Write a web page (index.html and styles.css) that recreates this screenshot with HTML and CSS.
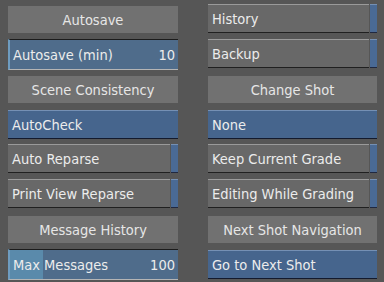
FILE: index.html
```html
<!DOCTYPE html>
<html lang="en">

<head>
    <meta charset="utf-8">
    <title>Preferences</title>
    <link rel="stylesheet" href="styles.css">
</head>

<body>
    <main class="panel">
        <div class="head">Autosave</div>
        <div class="btn"><span class="btn-body">History</span><span class="strip"></span></div>

        <div class="field"><span>Autosave (min)</span><span>10</span></div>
        <div class="btn"><span class="btn-body">Backup</span><span class="strip"></span></div>

        <div class="head">Scene Consistency</div>
        <div class="head">Change Shot</div>

        <div class="drop">AutoCheck</div>
        <div class="drop">None</div>

        <div class="btn"><span class="btn-body">Auto Reparse</span><span class="strip"></span></div>
        <div class="btn"><span class="btn-body">Keep Current Grade</span><span class="strip"></span></div>

        <div class="btn"><span class="btn-body">Print View Reparse</span><span class="strip"></span></div>
        <div class="btn"><span class="btn-body">Editing While Grading</span><span class="strip"></span></div>

        <div class="head">Message History</div>
        <div class="head">Next Shot Navigation</div>

        <div class="field slider"><span>Max Messages</span><span>100</span></div>
        <div class="drop">Go to Next Shot</div>
    </main>
</body>

</html>
```

FILE: styles.css
```css
* {
    box-sizing: border-box;
}

body {
    margin: 0;
    background-color: #565656;
    font-family: 'DejaVu Sans Condensed', 'DejaVu Sans', sans-serif;
    font-size: 14.5px;
    color: #ececec;
}

.panel {
    display: grid;
    grid-template-columns: 170px 169px;
    grid-auto-rows: 35px;
    column-gap: 30px;
    padding: 4px 0 0 8px;
    align-items: start;
}

.head {
    margin-top: 2px;
    height: 27px;
    line-height: 28px;
    text-align: center;
    background-color: #717171;
    color: #e6e6e6;
}

/* value field */
.field {
    display: flex;
    justify-content: space-between;
    height: 31px;
    line-height: 30px;
    padding: 0 3px 0 3px;
    background-color: #4f6c8b;
    border-top: 1px solid #1c1c1c;
    border-bottom: 1px solid #b5b5b5;
    border-left: 2px solid #6e9cc0;
}

.slider {
    background: linear-gradient(to right, #5a8aab 33px, #4f6c8b 33px);
}

.drop {
    margin-top: 1px;
    height: 29px;
    line-height: 28px;
    padding-left: 4px;
    background-color: #46658d;
    border-top: 1px solid #7590b4;
    border-bottom: 1px solid #141a2c;
}

.btn {
    display: flex;
    height: 29px;
}

.btn-body {
    flex: 1;
    line-height: 28px;
    padding-left: 4px;
    background-color: #686868;
    border-top: 1px solid #9a9a9a;
    border-bottom: 1px solid #202020;
}

.strip {
    width: 7px;
    margin-left: 1px;
    background-color: #4a6a95;
    border-top: 1px solid #7590b4;
    border-bottom: 1px solid #202840;
}
```
